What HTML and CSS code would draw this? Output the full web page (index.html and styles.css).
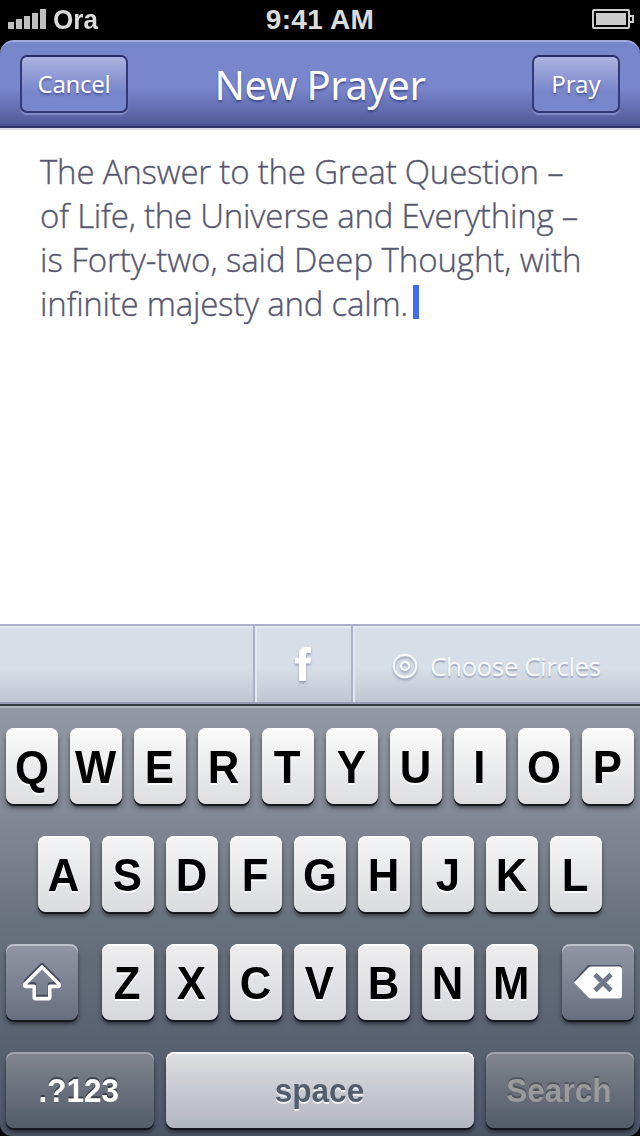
FILE: index.html
```html
<!DOCTYPE html>
<html lang="en">
<head>
<meta charset="utf-8">
<title>New Prayer</title>
<link rel="stylesheet" href="styles.css">
</head>
<body>
<div class="screen">
  <header class="status">
    <div class="carrier">
      <div class="signal"><i class="b1"></i><i class="b2"></i><i class="b3"></i><i class="b4"></i><i class="b5"></i></div>
      <span class="carrier-name">Ora</span>
    </div>
    <span class="clock">9:41 AM</span>
    <svg class="battery" width="42" height="20" viewBox="0 0 42 20"><rect x="1" y="1" width="36" height="18" rx="1" fill="none" stroke="#ccc" stroke-width="2"/><rect x="4" y="4" width="30" height="12" fill="#ccc"/><path d="M38 7h3v6h-3" fill="none" stroke="#ccc" stroke-width="2"/></svg>
  </header>
  <nav class="navbar">
    <button class="nav-btn cancel"><span>Cancel</span></button>
    <h1 class="title">New Prayer</h1>
    <button class="nav-btn pray"><span>Pray</span></button>
  </nav>
  <main class="note">
    <div class="line l1"><span>The Answer to the Great Question –</span></div>
    <div class="line l2"><span>of Life, the Universe and Everything –</span></div>
    <div class="line l3"><span>is Forty-two, said Deep Thought, with</span></div>
    <div class="line l4"><span>infinite majesty and calm.</span><i class="caret"></i></div>
  </main>
  <section class="toolbar">
    <div class="tool blank"></div>
    <div class="tool facebook"><svg class="fb" width="18" height="36" viewBox="0 0 18 36"><path d="M5 35V17.500H1V12h4V8.500C5 3.500 8 1 12.500 1H17v6h-3.200C12.500 7 12 7.800 12 9v3h5l-.6 5.500H12V35z" fill="#fff"/></svg></div>
    <div class="tool circles">
      <svg class="target" width="26" height="26" viewBox="0 0 26 26"><g fill="none" stroke="#f7f9fb" stroke-width="2.200"><circle cx="13" cy="13" r="11.200"/><circle cx="13" cy="13" r="4"/></g></svg>
      <span class="choose">Choose Circles</span>
    </div>
  </section>
  <section class="keyboard">
    <div class="row r1"><b class="key"><span>Q</span></b><b class="key"><span>W</span></b><b class="key"><span>E</span></b><b class="key"><span>R</span></b><b class="key"><span>T</span></b><b class="key"><span>Y</span></b><b class="key"><span>U</span></b><b class="key"><span>I</span></b><b class="key"><span>O</span></b><b class="key"><span>P</span></b></div>
    <div class="row r2"><b class="key"><span>A</span></b><b class="key"><span>S</span></b><b class="key"><span>D</span></b><b class="key"><span>F</span></b><b class="key"><span>G</span></b><b class="key"><span>H</span></b><b class="key"><span>J</span></b><b class="key"><span>K</span></b><b class="key"><span>L</span></b></div>
    <div class="row r3">
      <div class="key mod shift"><svg width="40" height="38" viewBox="0 0 40 38"><path d="M20 3.500 36.500 20v3H27.500v12.500h-15V23H3.500v-3z" transform="translate(0 -2)" fill="none" stroke="#414958" stroke-width="3.600" stroke-linejoin="round"/><path d="M20 4 37 21c.8 1.500.3 2.400-1 2.400h-8.200V34c0 1-.6 1.600-1.600 1.600H13.800c-1 0-1.600-.6-1.600-1.600V23.400H4c-1.300 0-1.800-.9-1-2.400z" fill="none" stroke="#fff" stroke-width="3.600" stroke-linejoin="round"/></svg></div>
      <b class="key"><span>Z</span></b><b class="key"><span>X</span></b><b class="key"><span>C</span></b><b class="key"><span>V</span></b><b class="key"><span>B</span></b><b class="key"><span>N</span></b><b class="key"><span>M</span></b>
      <div class="key mod delete"><svg width="48" height="34" viewBox="0 0 48 34"><path d="M0 15.500 14 0h31q3 0 3 3v25q0 3-3 3H15z" fill="#4b5362"/><path d="M0 17.500 14 3q1.500-1.500 3-1.500h28q3 0 3 3v26q0 3-3 3H17q-1.500 0-3-1.500z" fill="#fff"/><path d="m21 9.500 16 16m0-16-16 16" stroke="#6f7888" stroke-width="4.800"/></svg></div>
    </div>
    <div class="row r4"><b class="key mod num"><span>.?123</span></b><b class="key space"><span>space</span></b><b class="key mod search"><span>Search</span></b></div>
  </section>
</div>
</body>
</html>
```
FILE: styles.css
```css
* { box-sizing: border-box; }
body { margin: 0; background: #000; }
.screen { width: 640px; height: 1136px; display: flex; flex-direction: column; overflow: hidden; background: #000; font-family: "Liberation Sans", Arial, sans-serif; }

.status { height: 40px; display: grid; grid-template-columns: 1fr auto 1fr; align-items: center; padding: 0 6px 2px 8px; color: #dcdcdc; font-size: 28px; font-weight: bold; }
.carrier { display: flex; align-items: center; gap: 7px; }
.signal { display: flex; align-items: flex-end; gap: 2px; height: 20px; }
.signal i { width: 6px; background: #bfbfbf; }
.signal .b1 { height: 7px; }
.signal .b2 { height: 10px; }
.signal .b3 { height: 13px; }
.signal .b4 { height: 16px; }
.signal .b5 { height: 20px; }
.clock, .carrier-name { line-height: 36px; padding-top: 2px; }
.clock { letter-spacing: .3px; padding-right: 2px; }
.carrier-name { transform: scaleX(.93); transform-origin: 0 50%; }
.battery { justify-self: end; }

.navbar { height: 88px; flex: none; display: grid; grid-template-columns: 108px 1fr 108px; align-items: start; padding: 13px 20px 0; border-top: 2px solid #a0abdf; border-bottom: 2px solid #2f346b; border-radius: 14px 14px 0 0; background: linear-gradient(#7886cc 0 55%, #525b9b 98%); box-shadow: inset 0 -2px #4a5190; font-family: "Noto Sans", "Open Sans", sans-serif; color: #fff; text-shadow: 0 2px 2px rgba(40, 48, 110, .6); }
.nav-btn { height: 58px; padding: 0; border: 2px solid #333976; border-top-color: #272c66; border-radius: 7px; background: linear-gradient(#acb3e0, #7886cb 65%); box-shadow: 0 2px 1px rgba(150, 160, 220, .65); font: 24px "Noto Sans", "Open Sans", sans-serif; color: #fff; text-shadow: 0 2px 2px rgba(40, 48, 110, .5); }
.nav-btn span { display: block; white-space: nowrap; line-height: 54px; }
.cancel { width: 108px; }
.cancel span { letter-spacing: -.3px; }
.pray { width: 88px; justify-self: end; }
.title { margin: 0; text-align: center; font-size: 40px; line-height: 59px; font-weight: 400; letter-spacing: -.5px; }

.note { height: 496px; flex: none; padding: 20px 40px; border-top: 2px solid #dcdce2; background: #fff; color: #56586f; font: 300 33px/44px "Open Sans", "Noto Sans", sans-serif; -webkit-text-stroke: .35px #56586f; }
.line { height: 44px; display: flex; align-items: center; white-space: nowrap; }
.l1 { letter-spacing: -.2px; }
.l2 { letter-spacing: -.22px; }
.l3 { letter-spacing: -.07px; }
.l4 { letter-spacing: -.24px; }
.caret { width: 6px; height: 34px; margin: 0 0 4px 5px; background: #416cf2; }

.toolbar { height: 80px; flex: none; display: flex; border-top: 2px solid #a9b2c5; border-bottom: 2px solid #989fb4; background: linear-gradient(#d6dee7 0 55%, #c0c6d3); }
.tool { display: flex; align-items: center; box-shadow: inset 0 2px #e3e8ef; }
.blank { width: 253px; }
.facebook { width: 98px; justify-content: center; border-left: 2px solid #a9b2c6; box-shadow: inset 2px 2px #e3e8ef; }
.circles { flex: 1; padding: 3px 0 0 39px; gap: 12px; border-left: 2px solid #a9b2c6; box-shadow: inset 2px 2px #e3e8ef; }
.fb, .target { filter: drop-shadow(0 2px 1px rgba(125, 136, 165, .7)); }
.choose { font: 26px/40px "Open Sans", "Noto Sans", sans-serif; letter-spacing: -.45px; color: #f7f9fb; white-space: nowrap; text-shadow: 0 2px 1px #a3abc2; }

.keyboard { height: 432px; flex: none; display: flex; flex-direction: column; gap: 32px; padding: 22px 6px 8px; border-top: 2px solid #363b43; border-radius: 0 0 12px 12px; background: linear-gradient(#9299a4, #7b818f 35%, #68727e 50%, #4b5566); box-shadow: inset 0 2px #adb4bd; }
.row { display: flex; justify-content: center; gap: 12px; height: 76px; flex: none; }
.key { width: 52px; height: 76px; border-radius: 8px; display: flex; justify-content: center; align-items: center; padding: 2px 1px 0 0; font-size: 46px; line-height: 50px; color: #000; background: linear-gradient(#fafafa, #dddee0); box-shadow: 0 2px #15191e, 0 4px 4px rgba(0, 0, 0, .5), inset 0 2px #fff; text-shadow: 0 2px #fff; }
.key span { display: block; transform: scaleX(.95); }
.r2 .key { background: linear-gradient(#f4f5f6, #dadbde); }
.r3 .key { background: linear-gradient(#ededf0, #d7d8dc); }
.r3 .mod { width: 72px; padding: 0; background: linear-gradient(#9296a3, #677080); box-shadow: 0 2px #15191e, 0 4px 4px rgba(0, 0, 0, .5), inset 0 2px #bcc0c8; }
.shift { margin-right: 12px; }
.delete { margin-left: 12px; }
.r4 .key { font-size: 33.500px; padding: 1px 2px 0 0; }
.r4 .key span { transform: scaleX(.94); }
.r4 .mod { width: 148px; color: #fff; background: linear-gradient(#81858f, #525d69); box-shadow: 0 2px #15191e, 0 4px 4px rgba(0, 0, 0, .5), inset 0 2px #9fa4af; text-shadow: 0 -2px #3c434e; }
.r4 .space { width: 308px; color: #525d6b; background: linear-gradient(#dedfe2, #b1b5c0); text-shadow: 0 2px #f0f1f3; }
.r4 .search { color: #999b9d; text-shadow: 0 -2px #50565f; }
```
